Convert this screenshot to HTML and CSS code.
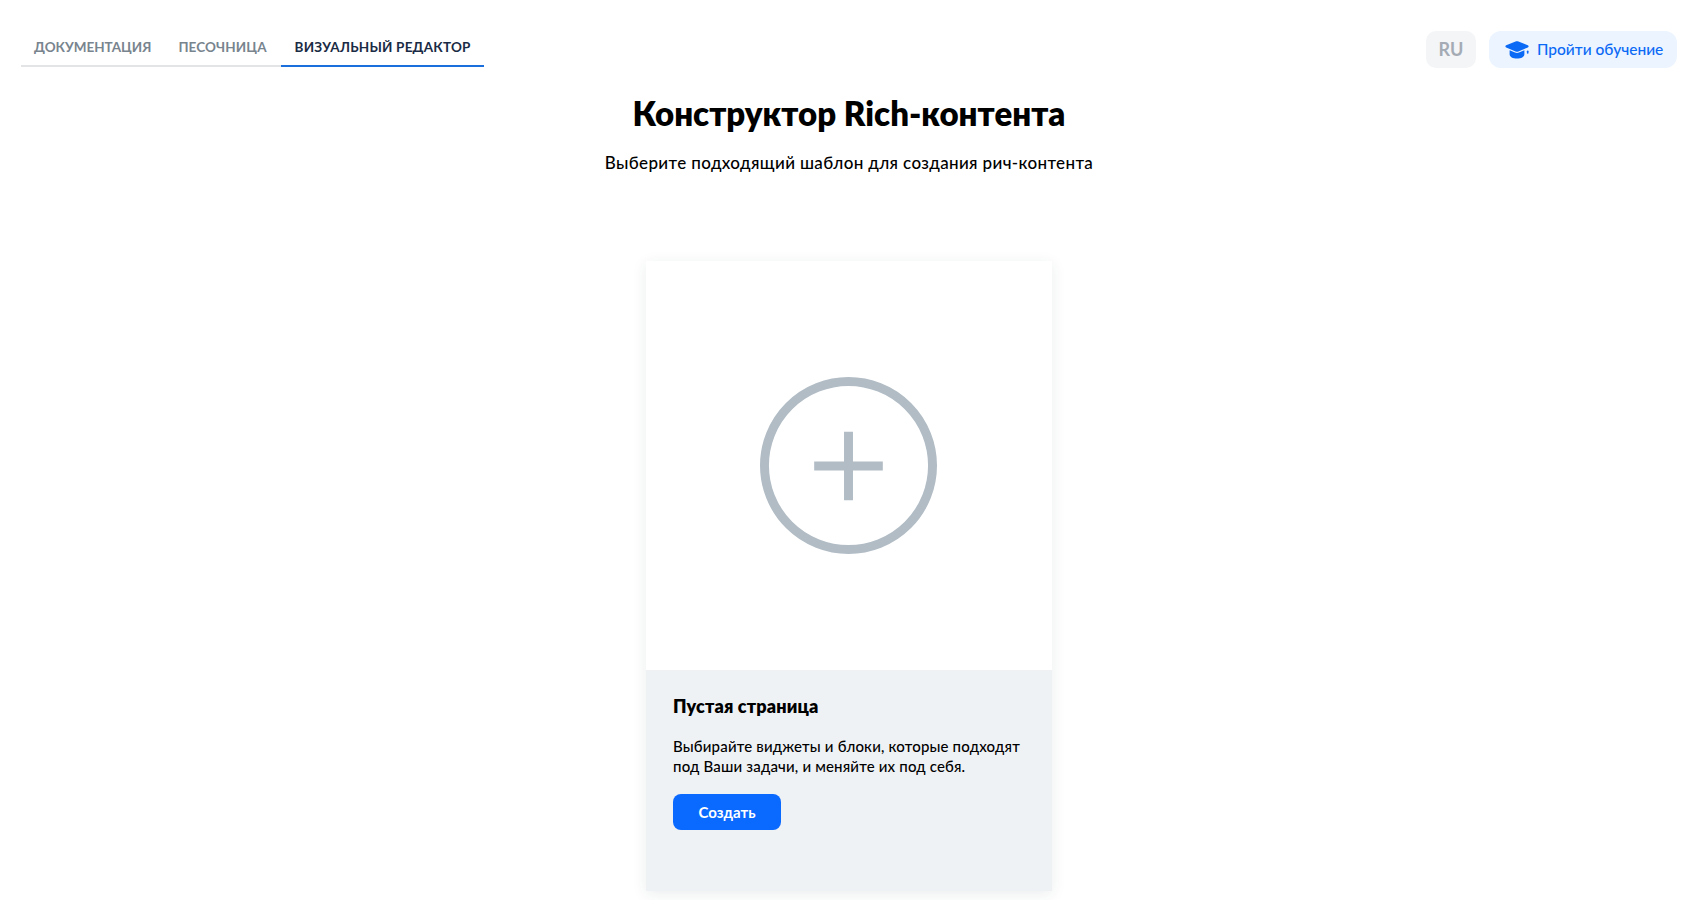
FILE: index.html
```html
<!DOCTYPE html>
<html lang="ru">
<head>
<meta charset="utf-8">
<title>Конструктор Rich-контента</title>
<link rel="stylesheet" href="styles.css">
</head>
<body>
<header class="topbar">
  <nav class="tabs">
    <a class="tab">ДОКУМЕНТАЦИЯ</a>
    <a class="tab tab-middle">ПЕСОЧНИЦА</a>
    <a class="tab tab-active">ВИЗУАЛЬНЫЙ РЕДАКТОР</a>
  </nav>
  <div class="actions">
    <span class="lang">RU</span>
    <a class="learn">
      <svg class="learn-icon" viewBox="0 0 26 20" aria-hidden="true">
        <path fill="#0a69f5" d="M11.400.600 1 4.800c-1.200.5-1.200 1.900 0 2.400l3.300 1.400 7.100 3c1 .4 2.200.4 3.200 0l10.400-4.400c1.200-.5 1.200-1.900 0-2.400L14.600.600c-1-.4-2.200-.4-3.200 0Z"/>
        <path fill="#0a69f5" d="M4.800 10.400v4.200c0 2.800 3.600 4.900 8.200 4.900s8.200-2.100 8.200-4.900v-4.200l-6 2.500c-1.400.6-3 .6-4.400 0l-6-2.500Z"/>
        <rect fill="#0a69f5" x="24" y="10.500" width="1.800" height="3.600" rx=".9"/>
      </svg>
      <span class="learn-label">Пройти обучение</span>
    </a>
  </div>
</header>
<main class="page">
  <h1 class="title">Конструктор Rich-контента</h1>
  <p class="subtitle">Выберите подходящий шаблон для создания рич-контента</p>
  <article class="card">
    <div class="card-preview">
      <svg class="plus" viewBox="0 0 178 178" aria-hidden="true">
        <circle cx="89" cy="89" r="84.500" fill="none" stroke="#b1bcc5" stroke-width="9"/>
        <path d="M89 55v69M54.500 89.500h69" fill="none" stroke="#b1bcc5" stroke-width="9"/>
      </svg>
    </div>
    <div class="card-body">
      <h2 class="card-title">Пустая страница</h2>
      <p class="card-text">Выбирайте виджеты и блоки, которые подходят под Ваши задачи, и меняйте их под себя.</p>
      <button class="create">Создать</button>
    </div>
  </article>
</main>
</body>
</html>
```

FILE: styles.css
```css
* { box-sizing: border-box; }
html, body { margin: 0; height: 900px; overflow: hidden; background: #fff; }
body { font-family: "Lato", "Noto Sans", sans-serif; color: #000; }

.topbar {
  display: flex;
  justify-content: space-between;
  align-items: flex-start;
  padding: 31px 21px 0 21px;
  height: 90px;
}
.tabs {
  display: flex;
  margin-top: -4px;
  border-bottom: 2px solid #e3e4e6;
  height: 40px;
}
.tab {
  height: 40px;
  padding: 11px 14px 0 13px;
  font-size: 13.500px;
  font-weight: 700;
  line-height: 18px;
  color: #78848e;
  white-space: nowrap;
}
.tab-middle { letter-spacing: .1px; }
.tab-active {
  padding: 11px 13px 0 14px;
  color: #1a2b45;
  letter-spacing: .2px;
  border-bottom: 2px solid #1a6fdc;
}
.actions { display: flex; gap: 13px; }
.lang {
  width: 50px;
  height: 37px;
  border-radius: 10px;
  background: #f4f5f7;
  color: #a4abb4;
  font-size: 18px;
  font-weight: 700;
  line-height: 36px;
  text-align: center;
}
.learn {
  display: flex;
  align-items: center;
  gap: 8px;
  width: 188px;
  height: 37px;
  padding-left: 16px;
  border-radius: 12px;
  background: #ebf4ff;
  color: #0a69f5;
  font-size: 15.500px;
  font-weight: 500;
  white-space: nowrap;
}
.learn-icon { width: 24px; height: 18px; flex: none; }
.learn-label { margin-top: -2px; }

.page {
  display: flex;
  flex-direction: column;
  align-items: center;
}
.title {
  margin: 4px 0 0;
  font-size: 33px;
  font-weight: 800;
  line-height: 38px;
  white-space: nowrap;
}
.subtitle {
  margin: 20px 0 0;
  font-size: 17px;
  font-weight: 500;
  line-height: 22px;
  letter-spacing: .36px;
}
.card {
  width: 406px;
  height: 630px;
  margin-top: 87px;
  display: flex;
  flex-direction: column;
  box-shadow: 0 3px 14px rgba(30, 50, 70, .09);
}
.card-preview {
  height: 409px;
  display: flex;
  align-items: center;
  justify-content: center;
  background: #fff;
}
.plus { width: 177px; height: 177px; margin: 0 1px 1px 0; }
.card-body {
  flex: 1;
  padding: 24px 27px 0;
  background: #eff2f5;
}
.card-title {
  margin: 0;
  font-size: 18px;
  font-weight: 800;
  line-height: 24px;
  letter-spacing: .15px;
}
.card-text {
  margin: 18px 0 0;
  font-size: 15px;
  font-weight: 500;
  line-height: 20px;
  letter-spacing: .17px;
}
.create {
  display: block;
  width: 108px;
  height: 36px;
  margin-top: 18px;
  border: 0;
  border-radius: 8px;
  background: #0a69ff;
  color: #fff;
  font-family: inherit;
  font-size: 15px;
  font-weight: 700;
}
```
